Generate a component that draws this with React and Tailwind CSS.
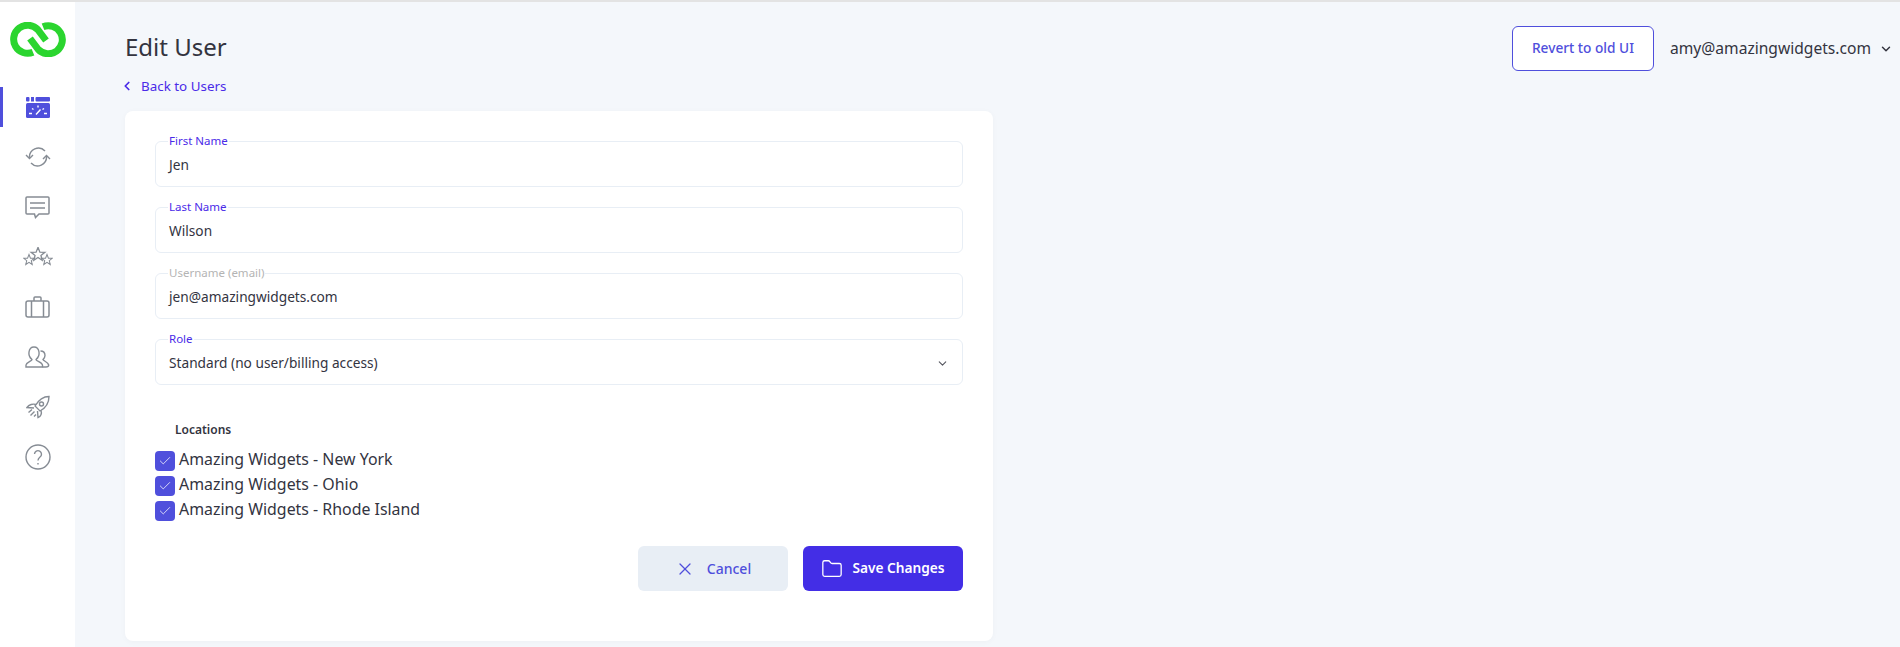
import React from 'react';
import { ChevronDown, ChevronLeft, X, Folder, Check } from 'lucide-react';

const font = { fontFamily: '"Noto Sans", sans-serif' };
const gray = '#868c94';

const Logo = () => (
  <svg width="56" height="35" viewBox="0 0 56 35" fill="none" stroke="#2bd52f" strokeWidth="7">
    <path d="M23 30.2 A 14 14 0 1 1 27.7 7.5 L 36 18.5" />
    <path d="M33 4.8 A 14 14 0 1 1 28.3 27.5 L 20 16.5" />
  </svg>
);

const Dashboard = () => (
  <svg width="24" height="21" viewBox="0 0 24 21">
    <g fill="#4f4fdc">
      <rect x="0" y="0" width="3.5" height="4.5" rx="1" />
      <rect x="5" y="0" width="3" height="4.5" />
      <rect x="9.5" y="0" width="14.5" height="4.5" rx="1" />
      <rect x="0" y="6" width="24" height="15" rx="1.5" />
    </g>
    <path d="M3 16.5h3M18 16.5h3M6 11.5l1.5 1M18 11.5l-1.5 1M12 8.5v2M10 17.5l4.5-5" stroke="#fff" strokeWidth="1.4" fill="none" />
  </svg>
);

const Sync = () => (
  <svg width="26" height="22" viewBox="0 0 26 22" fill="none" stroke={gray} strokeWidth="1.4">
    <path d="M4.5 12 A 9 9 0 0 1 20 5" />
    <path d="M1 9 L4.5 12.5 L8 9" />
    <path d="M21.5 10 A 9 9 0 0 1 6 17" />
    <path d="M18 13 L21.5 9.5 L25 13" />
  </svg>
);

const Chat = () => (
  <svg width="25" height="23" viewBox="0 0 25 23" fill="none" stroke={gray} strokeWidth="1.5">
    <path d="M2 1 H23 A1 1 0 0 1 24 2 V17 A1 1 0 0 1 23 18 H14 L10.5 21.5 L9.5 18 H2 A1 1 0 0 1 1 17 V2 A1 1 0 0 1 2 1 Z" />
    <path d="M5 7 H20 M5 12 H20" />
  </svg>
);

const starD = 'M0 -6.5 L1.7 -2.1 L6.2 -2 L2.7 0.8 L3.8 5.3 L0 2.7 L-3.8 5.3 L-2.7 0.8 L-6.2 -2 L-1.7 -2.1 Z';

const Stars = () => (
  <svg width="30" height="20" viewBox="0 0 30 20" fill="none" stroke={gray} strokeWidth="1.2">
    <path d={starD} transform="translate(15 7.5) scale(1.1)" />
    <path d={starD} transform="translate(6 13) scale(0.85)" />
    <path d={starD} transform="translate(24 13) scale(0.85)" />
  </svg>
);

const Case = () => (
  <svg width="25" height="22" viewBox="0 0 25 22" fill="none" stroke={gray} strokeWidth="1.5">
    <rect x="1" y="5" width="23" height="16" rx="2" />
    <path d="M6.5 5 V21 M18.5 5 V21 M9 5 V2 A1 1 0 0 1 10 1 H15 A1 1 0 0 1 16 2 V5" />
  </svg>
);

const People = () => (
  <svg width="25" height="22" viewBox="0 0 25 22" fill="none" stroke={gray} strokeWidth="1.4">
    <path d="M7 13.5 C4 11 3.5 9 4 6 C4.5 2.5 7 1 9 1 C11 1 13.5 2.5 14 6 C14.5 9 14 11 11 13.5 C11 15 17 16 17.5 19 V21 H1 V19 C1.5 16 7 15 7 13.5 Z" />
    <path d="M15.5 5 C18 5 20 6.5 20 9.5 C20 11 19 12.5 18 13.5 C18.5 15 23 16 23.7 19 C23.7 20.5 22.5 21 21 21 H17.5" />
  </svg>
);

const Launch = () => (
  <svg width="24" height="24" viewBox="0 0 24 24" fill="none" stroke={gray} strokeWidth="1.4">
    <path d="M23 1.5 C16 1.5 12 6 9 11 L14 16 C19.5 13 23 8.5 23 1.5 Z" />
    <circle cx="15.5" cy="9" r="2" />
    <path d="M10 9.5 C7 8.5 3 9.5 1 12.5 L8 13" />
    <path d="M15 15.5 C16 18.5 15 21.5 12 22.5 L11.5 16" />
    <path d="M2.5 17.5 L6 14.5 M4.5 20.5 L8.5 16.5 M8 21.5 L10 19.5" />
  </svg>
);

const Help = () => (
  <svg width="26" height="26" viewBox="0 0 26 26" fill="none" stroke={gray} strokeWidth="1.4">
    <circle cx="13" cy="13" r="12" />
    <path d="M9.5 10 A3.5 3.5 0 1 1 15 13 C13.7 14 13 14.6 13 16.5 M13 19 V20.5" />
  </svg>
);

const SideItem = ({ children, active }) => (
  <div className="h-[50px] flex items-center">
    <div className={`w-full h-[40px] flex items-center justify-center ${active ? 'border-l-[3px] border-[#4f4fdc] pr-[3px]' : ''}`}>
      {children}
    </div>
  </div>
);

const Field = ({ label, value, muted, select }) => (
  <fieldset className="h-[52px] rounded-md border border-[#e8eef5] px-[13px] -mt-[6px]">
    <legend className={`px-[1px] -ml-[1px] text-[11.5px] leading-[12px] ${muted ? 'text-[#b4b4b4]' : 'text-[#4a2be8]'}`}>{label}</legend>
    <div className="flex items-center justify-between h-[37px] text-[13.7px] text-[#33343f]">
      <span>{value}</span>
      {select && <ChevronDown size={13} className="text-[#55565f]" />}
    </div>
  </fieldset>
);

const Loc = ({ name }) => (
  <div className="flex items-center h-[25px] gap-[4px]">
    <span className="w-5 h-5 rounded-[4px] bg-[#4f4fdc] flex items-center justify-center">
      <Check size={14} strokeWidth={1.3} className="text-white" />
    </span>
    <span className="-mt-[2px] text-[15.9px] text-[#33343f]">{name}</span>
  </div>
);

export default function App() {
  return (
    <div style={font} className="w-[1900px] h-[647px] overflow-hidden flex flex-col bg-[#f4f7fb]">
      <div className="h-[2px] bg-[#e3e3e3]" />
      <div className="flex flex-1 min-h-0">
        <aside className="w-[75px] bg-white flex flex-col">
          <div className="h-[80px] pt-[20px] pl-[10px]"><Logo /></div>
          <SideItem active><Dashboard /></SideItem>
          <SideItem><Sync /></SideItem>
          <SideItem><Chat /></SideItem>
          <SideItem><Stars /></SideItem>
          <SideItem><Case /></SideItem>
          <SideItem><People /></SideItem>
          <SideItem><Launch /></SideItem>
          <SideItem><Help /></SideItem>
        </aside>
        <main className="flex-1 flex flex-col pl-[50px] pr-[7px]">
          <div className="flex justify-between">
            <div>
              <h1 className="mt-[29px] text-[24px] leading-[32px] text-[#33343f]">Edit User</h1>
              <a className="-ml-[5px] mt-[14px] flex items-center gap-[7px] text-[13.4px] leading-[18px] text-[#4a2be8]">
                <ChevronLeft size={14} strokeWidth={3} />Back to Users
              </a>
            </div>
            <div className="mt-[24px] flex items-start gap-[16px]">
              <button className="w-[142px] h-[45px] rounded-md border border-[#4f4fdc] bg-white text-[13.7px] font-medium text-[#4f4fdc]">Revert to old UI</button>
              <div className="h-[45px] flex items-center gap-[8px] text-[15.6px] text-[#33343f]">
                amy@amazingwidgets.com
                <ChevronDown size={14} strokeWidth={2.5} />
              </div>
            </div>
          </div>
          <section className="mt-[16px] w-[868px] h-[530px] rounded-lg bg-white pl-[30px] pr-[30px] pt-[30px] shadow-[0_1px_6px_rgba(0,0,0,0.03)]">
            <div className="flex flex-col gap-[20px]">
              <Field label="First Name" value="Jen" />
              <Field label="Last Name" value="Wilson" />
              <Field label="Username (email)" value="jen@amazingwidgets.com" muted />
              <Field label="Role" value="Standard (no user/billing access)" select />
            </div>
            <div className="mt-[37px] pl-[20px] text-[12px] font-semibold leading-[16px] text-[#33343f]">Locations</div>
            <div className="mt-[10px]">
              <Loc name="Amazing Widgets - New York" />
              <Loc name="Amazing Widgets - Ohio" />
              <Loc name="Amazing Widgets - Rhode Island" />
            </div>
            <div className="mt-[23px] flex justify-end gap-[15px]">
              <button className="w-[150px] h-[45px] rounded-md bg-[#e8eef5] flex items-center justify-center gap-[12px] text-[14px] font-medium text-[#4f4fdc]">
                <X size={20} strokeWidth={1.5} />Cancel
              </button>
              <button className="w-[160px] h-[45px] rounded-md bg-[#432ee6] flex items-center justify-center gap-[9px] text-[13.7px] font-semibold text-white">
                <Folder size={22} strokeWidth={1.4} />Save Changes
              </button>
            </div>
          </section>
        </main>
      </div>
    </div>
  );
}
